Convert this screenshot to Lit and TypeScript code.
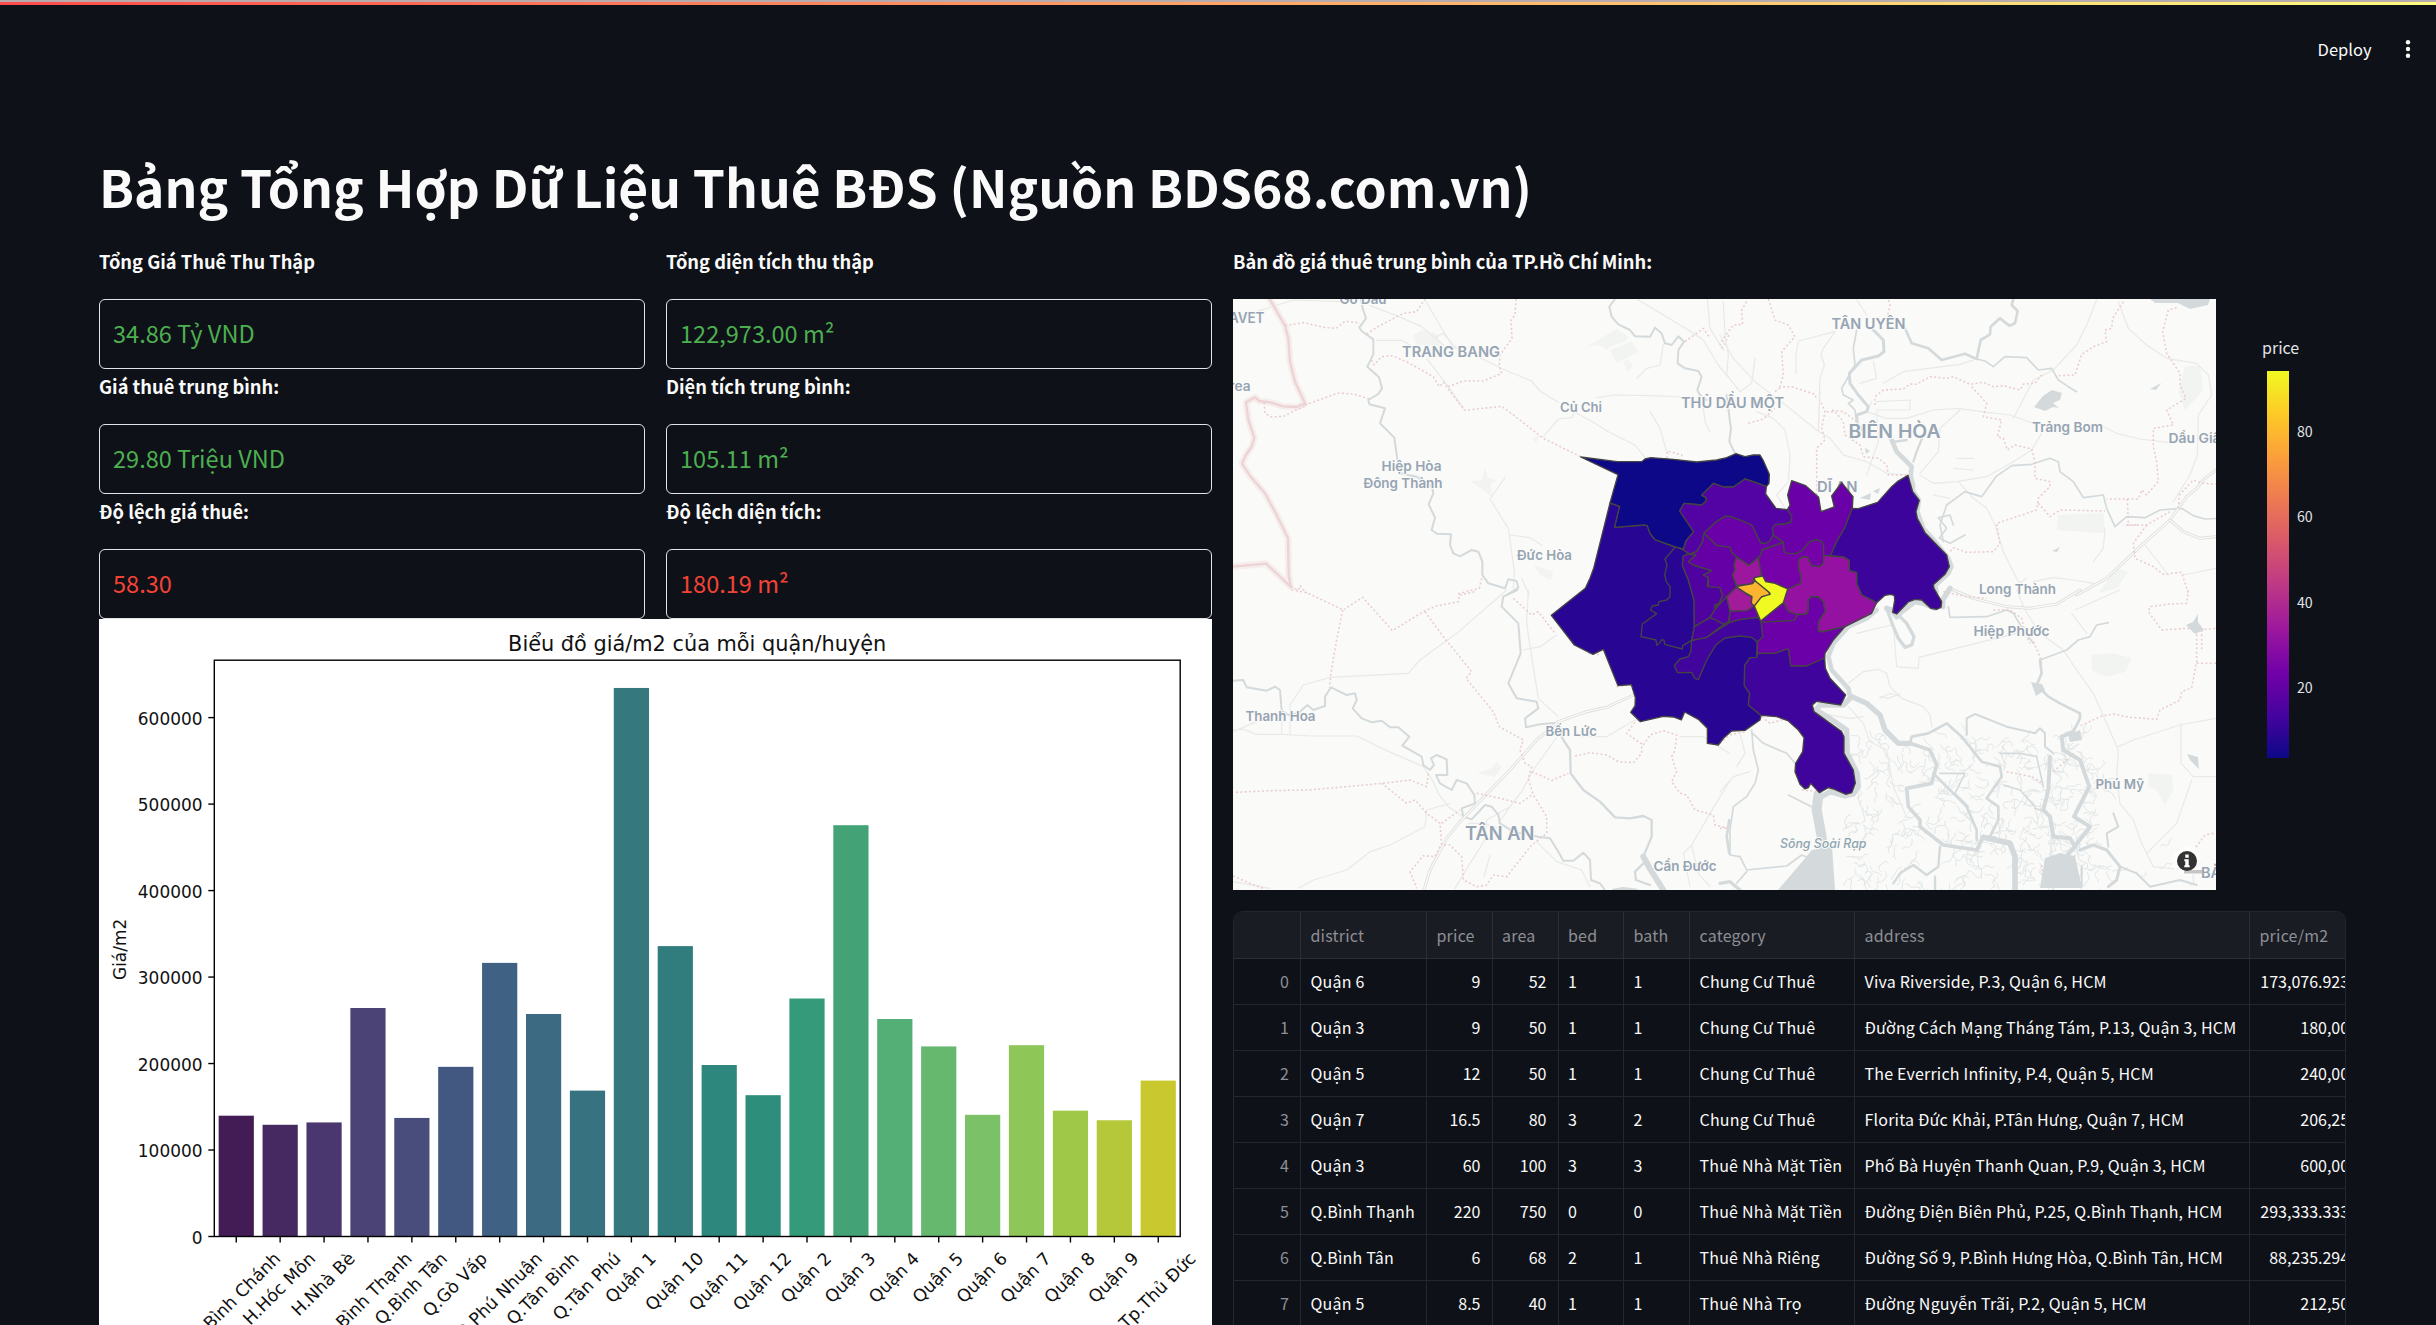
import { LitElement, html, svg, css } from "lit";
import { customElement } from "lit/decorators.js";

const FONT = css`"Noto Sans CJK JP", "Noto Sans", sans-serif`;

/* ---------- metrics ---------- */

interface Stat { label: string; value: string; tone: "good" | "bad"; }

const STATS: Stat[] = [
  { label: "Tổng Giá Thuê Thu Thập", value: "34.86 Tỷ VND", tone: "good" },
  { label: "Tổng diện tích thu thập", value: "122,973.00 m²", tone: "good" },
  { label: "Giá thuê trung bình:", value: "29.80 Triệu VND", tone: "good" },
  { label: "Diện tích trung bình:", value: "105.11 m²", tone: "good" },
  { label: "Độ lệch giá thuê:", value: "58.30", tone: "bad" },
  { label: "Độ lệch diện tích:", value: "180.19 m²", tone: "bad" },
];

@customElement("stat-box")
export class StatBox extends LitElement {
  static properties = { stat: { attribute: false } };
  declare stat: Stat;
  static styles = css`
    :host { display: flex; flex-direction: column; font-family: ${FONT}; }
    .label { color: #fafafa; font-weight: 700; font-size: 18.3px; line-height: 32px; white-space: nowrap; margin-bottom: 22px; }
    .box { box-sizing: border-box; height: 70px; border: 1px solid #e4e4e6; border-radius: 6px; padding: 0 13px; font-size: 23.55px; line-height: 67px; white-space: nowrap; }
    .good { color: #4caf50; }
    .bad { color: #f44336; }
  `;
  render() {
    return html`<div class="label">${this.stat.label}</div>
      <div class="box ${this.stat.tone}">${this.stat.value}</div>`;
  }
}

/* ---------- bar chart ---------- */

const BARS: [string, number, string][] = [
  ["H.Bình Chánh", 139700, "#431c56"], ["H.Hóc Môn", 129200, "#472961"], ["H.Nhà Bè", 131900, "#4b376f"],
  ["Q.Bình Thạnh", 264200, "#4b4376"], ["Q.Bình Tân", 137100, "#484d7c"], ["Q.Gò Vấp", 196200, "#435880"],
  ["Q.Phú Nhuận", 316400, "#3f6183"], ["Q.Tân Bình", 257300, "#3b6a82"], ["Q.Tân Phú", 168700, "#377280"],
  ["Quận 1", 634300, "#35797f"], ["Quận 10", 335800, "#317d7e"], ["Quận 11", 198300, "#2e877c"],
  ["Quận 12", 163400, "#2d8f7b"], ["Quận 2", 275200, "#349a79"], ["Quận 3", 475600, "#43a377"],
  ["Quận 4", 251500, "#53af75"], ["Quận 5", 219800, "#66b86f"], ["Quận 6", 140700, "#7ac167"],
  ["Quận 7", 221200, "#8ec657"], ["Quận 8", 145500, "#9fc748"], ["Quận 9", 134400, "#b4c83a"],
  ["Tp.Thủ Đức", 180300, "#c9c92f"],
];

@customElement("price-chart")
export class PriceChart extends LitElement {
  static styles = css`
    :host { display: block; background: #fff; height: 706px; overflow: hidden; }
    svg { display: block; font-family: "DejaVu Sans", sans-serif; font-size: 16.95px; fill: #111; }
    .title { font-size: 20.85px; }
    .tick { font-size: 17.4px; }
    .axis { fill: none; stroke: #000; stroke-width: 1.4; }
  `;
  render() {
    const L = 214.3, R = 1180.2, T = 660.2, B = 1236.5, unit = 86.48;
    const step = (R - L) / BARS.length;
    const ctx = document.createElement("canvas").getContext("2d")!;
    ctx.font = '17.4px "DejaVu Sans"';
    return html`<svg width="1113" height="706" viewBox="99 619 1113 706">
      <text class="title" x="697.2" y="651.3" text-anchor="middle">Biểu đồ giá/m2 của mỗi quận/huyện</text>
      <text transform="translate(125.5 949.4) rotate(-90)" text-anchor="middle">Giá/m2</text>
      ${BARS.map(([name, v, color], i) => {
        const cx = L + step * (i + 0.5), h = (v / 100000) * unit;
        const w = ctx.measureText(name).width;
        return svg`<rect x=${cx - 17.6} y=${B - h} width="35.2" height=${h} fill=${color}/>
          <path class="axis" d="M${cx} ${B}v6"/>
          <text class="tick" transform="translate(${cx + w * 0.354 + 3.3} 1259.7) rotate(-45)" text-anchor="end">${name}</text>`;
      })}
      ${[0, 1, 2, 3, 4, 5, 6].map((n) => svg`<path class="axis" d="M${L} ${B - n * unit}h-6"/>
        <text x="202.5" y=${B - n * unit + 7} text-anchor="end">${n * 100000}</text>`)}
      <rect class="axis" x=${L} y=${T} width=${R - L} height=${B - T}/>
    </svg>`;
  }
}

/* ---------- map ---------- */

type Tile = { x: number; y: number; road?: string[]; river?: [number, string][]; edge?: string[]; area?: string[]; green?: string[]; frontier?: string[]; motor?: string[] };

const TILES: Tile[] = [
  {
    x: 1230, y: 295,
    frontier: [
      "M112 0 165 92 175 130 180 200 195 260 225 325 200 336 160 334 120 322 88 318 75 307 48 322 55 375 73 428 65 455 48 480 36 505 60 543 105 595 140 660 174 730 176 840 182 875",
      "M9 815 108 806 145 840 182 875",
    ],
    edge: [
      "M165 92 220 83 280 97 318 100 345 79 390 84", "M410 118 440 97 520 55 560 50 585 12", "M225 330 325 294 370 297 418 312",
      "M102 322 105 355 125 366 160 364 200 344 225 333", "M424 195 432 210 455 185 485 182 530 200 610 245 628 275 640 262 668 300 705 346 815 334 870 375 940 430 1050 484 1165 540",
      "M858 12 855 60 843 75 846 130 810 180 808 215 815 235 760 258 700 258 655 275", "M182 875 205 885 210 872 230 895",
      "M1310 490 1312 468 1355 480 1357 490", "M755 850 748 880 680 897", "M1365 140 1420 100 1440 130", "M1475 160 1500 115",
    ],
    river: [
      [6, "M393 12 398 40 408 70 388 98 395 108 430 133 430 178 412 215 447 247 456 280 445 297 415 315 418 328 465 340 450 385 493 428 503 500 510 535 560 545 606 575 610 595 596 628 615 668 605 705 620 716 663 718 660 750 670 775 690 784 725 765 745 770 757 800 757 840 775 865 825 880 835 853 860 858 865 878 830 900"],
      [6, "M1155 12 1138 35 1145 65 1165 88 1200 105 1215 124 1260 125 1275 98 1295 115 1305 145 1325 150 1345 124 1362 140 1345 165 1343 205 1365 220 1405 228 1415 245 1402 285 1410 300 1430 315"],
    ],
    road: [
      "M9 70 80 50 190 15 330 20 M420 32 500 62 575 95 640 150 M585 15 665 150 675 160 M440 136 515 136 545 153 M750 188 825 225 905 258 930 288 985 322 M1035 352 1090 382 1135 410 1215 450 1245 488",
      "M590 190 655 275 700 340 M940 425 985 372 1025 368 1035 350 M1100 308 1150 300 1260 302 1360 306 M825 548 780 612 835 700 853 830 850 880 M840 720 900 728 935 750 M1225 15 1375 105 1420 135 1465 210 1498 250 M1432 12 1440 100 1480 165",
      "M620 125 640 115 680 160 M1220 250 1250 220 1290 210 1300 150 M1260 350 1290 400 1310 470 M1420 340 1425 380 1440 410 M875 850 898 900",
    ],
    green: ["M1070 155 1160 102 1195 125 1190 137 1140 155 1130 165 1110 150z", "M1140 165 1205 140 1225 172 1160 203z", "M1180 205 1190 192 1210 210 1195 230z"],
    area: ["M550 120 575 105 620 115 635 155 560 150z", "M720 558 755 555 765 520 775 550 800 555 780 570 790 610 760 585z", "M912 810 970 830 962 855 930 840z", "M905 430 930 420 918 445z"],
  },
  {
    x: 1720, y: 295,
    river: [
      [8, "M555 100 575 145 625 160 665 195 735 176 770 192 782 135 810 118 812 95 840 70 868 92 885 85 893 48 875 30 880 12"],
      [5, "M770 192 795 198 820 215 855 185 920 188 955 225 995 220 1015 255 1045 275 1070 290"],
      [9, "M460 105 490 135 492 170 475 183 425 195 388 235 390 265 415 300 445 335 440 350 410 360 412 385 430 410"],
      [5, "M410 105 400 160 405 210 388 240 365 280 370 300 400 315 385 325 405 345 410 380"],
      [14, "M515 435 530 470 555 495 575 515 572 540 580 575"],
      [7, "M608 425 590 470 580 500 M525 440 560 435"],
      [14, "M572 545 580 590 597 615 592 650 610 700 650 745 685 790 694 815 685 835 645 872 650 890"],
      [6, "M20 300 30 380 33 400 28 440 45 475"],
      [5, "M670 740 660 690 680 630 735 590 785 605 828 545 875 512 935 508 990 490 1015 500 1020 530 1060 560 1090 608 1150 600 1160 640 1185 695 1220 665 1275 668 1320 645 1385 640 1420 662 1455 672 1500 670"],
      [5, "M700 690 690 660 655 668 680 700 658 730 690 745 735 720"],
    ],
    area: [],
    green: ["M1395 215 1440 210 1450 285 1395 345 1375 290z", "M1015 660 1150 655 1155 715 1010 705z", "M1135 895 1190 820 1225 830 1190 880z"],
    edge: [
      "M505 15 510 30 500 75", "M80 20 65 45 68 88 40 90 10 130 0 150", "M145 12 165 75 205 90 225 125 185 170 190 240 180 275 215 275 285 298 290 315",
      "M165 290 185 275", "M465 330 465 305 490 285 550 282 570 267 590 268 630 245 680 250 700 245 750 268 790 262 820 275 850 272 900 285 910 267 945 265 965 240", "M755 275 800 325 790 365 845 375 832 425 850 430 862 465 885 450 935 462 945 500 945 550 990 560 990 575 955 610 950 645 830 685 840 745 820 770 740 772 700 758 690 770",
      "M955 625 990 665 1020 645 1155 648", "M1210 20 1178 70 1175 100 1155 105 1160 140 1120 155 1085 178 1065 240 1015 242", "M1370 38 1345 45 1328 110 1340 175 1380 235 1380 270 1398 310 1340 345 1360 390 1300 400 1300 455 1310 500 1315 560 1280 600 1265 585 1255 612 1160 612",
      "M290 600 290 460 315 435 305 400 315 350 300 315", "M320 350 345 350 370 380 375 420 420 450 430 485 475 490 500 510 505 540 560 540", "M1222 612 1225 690 1280 690 1350 650", "M1250 690 1210 690 M1280 690 1240 745 1245 790 1300 815 1330 838 1385 832 1405 895", "M1375 640 1378 600 1420 555 1450 565 1490 568", "M85 385 130 372 165 340", "M410 380 370 350 330 345",
    ],
    road: [
      "M10 20 15 120 25 180 20 240 60 290 95 265 105 190 M0 120 40 190 105 260 190 325 290 405 330 430 370 480 440 500 500 535 570 540 M110 350 160 370 195 405 210 480 205 560 170 600 195 640 M300 290 295 410 M345 110 310 160 303 180 313 210 300 250 295 400",
      "M410 15 440 60 M345 110 235 138 228 180 228 235 M490 265 550 230 720 208 760 195 M560 370 640 345 715 340 800 352 870 360 940 385 M1150 395 1190 415 1260 432 1345 442 M720 345 660 400 655 470 600 535 M600 540 640 565 710 560 800 545 880 500 935 465 965 415",
      "M715 560 760 610 800 640 825 690 850 770 895 860 M1130 15 1100 90 1070 150 1000 225 940 255 880 370 M1195 20 1225 100 1280 150 1340 190 1430 205 1465 240 1475 300 1435 360 1432 480 1410 540 1360 620 M1155 700 1150 760 1120 800 M1275 750 1345 840 M940 860 1000 848 1060 855 1120 865 M920 850 890 870 M1390 840 1488 820",
      "M470 320 570 315 570 345 470 345 M455 320 440 350 500 370 560 370 M640 600 690 610 M710 490 760 490 M700 520 760 525 M470 350 475 440 440 540 M460 200 470 250 420 265",
    ],
    motor: ["M1488 525 1455 550 1430 580 1400 605 1350 675 1260 755 1160 850 1070 900", "M1350 675 1390 710 1440 730 1488 725"],
  },
  {
    x: 1230, y: 590,
    river: [
      [6, "M9 272 40 270 50 292 110 302 135 290 150 300 155 362 175 375 205 370 232 345 250 360 285 348 285 320 303 292 350 315 375 310 380 330 368 355 395 385 425 397 455 392 480 412 505 412 538 440 517 467 575 500 580 525 600 540 612 525 603 505 620 495 650 508 652 555 618 555 630 580 665 600 680 570 710 580 733 615 735 640 695 655 700 680 725 688 765 645 785 650 805 675 810 700 850 725 925 740 960 745 985 785 1000 812 1030 812 1060 788 1080 810 1083 870 1110 880 1125 900"],
      [6, "M862 0 820 20 815 50 865 100 872 190 835 280 860 325 920 335 925 355 885 385 888 412 930 403 980 398"],
      [7, "M985 415 1000 450 1020 480 1022 550 1060 600 1110 635 1155 682 1200 685 1240 678 1265 690 1265 740 1240 800"],
      [18, "M1240 800 1262 840 1300 900"], [7, "M1240 820 1215 845 1218 870 1260 885"],
      [8, "M1150 900 1180 895 1220 900"],
      [8, "M1498 690 1490 740 1498 790"],
    ],
    edge: [
      "M185 0 230 8 340 60 398 22 487 122 585 62 620 48 685 35 688 15 735 5", "M338 60 320 150 305 235 298 292", "M585 65 640 140 725 245 708 265 790 365 808 410 880 450 870 480 885 520 905 530 895 565 910 615 950 680 950 730 905 765 830 860 790 855 770 885 740 890 700 870 695 800 660 765 635 765 M635 765 630 700 590 670 555 630 530 640 455 580",
      "M18 607 120 602 235 600 350 590 455 580 540 570 590 590 595 550", "M635 700 690 660 M740 610 790 620 870 640 905 615", "M905 545 940 560 965 572 1015 550", "M850 25 905 75 925 65 975 130", "M1035 498 1080 488 1130 495 1165 515 1210 518 1235 490 1235 462 1190 430 1220 390", "M1240 465 1260 435 1300 422 1340 435 1335 480 1325 500 1340 545 1325 575 1350 610 1370 615 1395 660 1450 675 1455 705 1498 715", "M9 858 60 880 100 895", "M630 770 615 800 580 797 540 845 560 895 M1075 190 1110 195 M1160 290 1200 285",
    ],
    road: [
      "M830 0 680 130 570 210 535 250 300 262 220 285 180 345 180 432 M9 425 80 395 M9 420 40 418 80 433 155 433 245 438 380 438 455 475 580 530 610 575 625 610 655 650 700 680 M895 0 890 100 905 200 925 325 985 380 M205 895 250 870 350 840 420 785 480 765 585 710 590 660 660 640",
      "M985 435 910 540 875 605 840 650 770 690 765 750 720 820 675 895 M805 700 840 650 M780 795 762 860 M920 755 980 815 1055 840 1080 890 M1045 440 1130 440 1180 410 1215 390 M1498 575 1440 670 1385 765 1360 790 1370 840 1380 890 M1385 765 1405 850 1440 890 M880 180 930 170 980 135 M155 380 155 430 M9 875 120 895",
      "M715 700 760 700 800 712 M1350 440 1420 440 1498 490",
    ],
    motor: ["M582 900 600 840 650 745 690 695 840 540 920 450 985 395 1070 365 1130 352 1210 315"],
    area: ["M740 550 785 535 800 515 815 530 795 560z"],
  },
  {
    x: 1720, y: 590,
    river: [
      [16, "M690 -5 668 30 668 50 M645 55 610 40 585 35 545 65 530 80 515 60 500 55"],
      [14, "M470 60 440 85 385 110 340 160 325 200 335 240 385 295 390 320"],
      [10, "M500 55 520 110 535 145 555 172 575 165 582 140 560 100 540 80"],
      [16, "M395 320 370 345 300 345 288 360 330 385 380 420 382 490 412 550 415 590 400 612 375 618 330 605 305 620"],
      [30, "M295 615 290 660 305 740 310 830 320 900"],
      [16, "M395 320 440 340 480 375 495 420 535 460 570 460"],
      [11, "M570 460 630 480 650 525 635 580 560 595 565 650 600 690 600 710 670 765 770 780 790 740 825 745"],
      [17, "M790 742 870 760 885 800 885 900"],
      [8, "M570 460 575 440 625 430 680 400 725 440 785 515 840 530 845 560 800 625 835 650 835 690 810 740 M640 550 670 580 740 650 770 720 770 750"],
      [6, "M740 435 740 385 765 372 860 410 945 430 960 415 975 430 975 470 1000 490"],
      [12, "M990 500 985 600 970 660 990 680 1000 740 1050 745 1065 770"],
      [12, "M1060 425 1025 440 1030 480 1080 510 1108 590 1062 680 1110 710 1060 775 1020 820"],
      [8, "M1060 425 1080 385 1080 370 1020 340 985 320 950 285 965 250 960 210"],
      [5, "M960 210 1040 180 1075 150 1110 140 1130 105 1165 98 M940 160 910 120 880 70 860 60 800 80 690 82 685 50"],
      [5, "M95 420 100 480 115 540 105 580 80 620 40 650 30 720 30 795 60 800 80 840 200 828 245 795 270 805 M80 845 50 880 M98 430 130 460 200 490 225 520 M205 615 275 650"],
      [7, "M660 770 655 830 620 855 580 825 540 850 520 880 M645 860 645 900"],
      [9, "M1080 780 1120 765 1160 780 1200 830 1190 870 1165 890"],
      [6, "M1200 830 1250 850 1290 890 1380 870 1430 885 M1180 670 1195 710 1160 730 1165 770 M1085 830 1085 890"],
      [10, "M0 880 30 875 60 900"],
      [5, "M840 490 900 490 950 500 970 590 M660 550 735 550 705 610 745 650 M850 585 900 600 945 650 M945 655 975 665"],
    ],
    area: [], green: ["M1115 195 1180 190 1235 205 1215 245 1160 260 1115 240z", "M1285 550 1355 555 1360 600 1335 645 1310 600 1285 590z"],
    edge: [
      "M940 155 960 200 965 220", "M670 5 740 20 800 25 M820 60 870 60 905 85 915 130 930 160", "M1405 0 1400 40 1350 42 1290 50 1285 65 1325 120 1400 115 1430 120 1488 115 M1430 120 1430 215 1415 293 1385 305 1380 330 1320 360 1310 388 1230 382 1180 372 1145 378 1080 408", "M1430 220 1488 220 M1445 120 1445 180",
      "M1000 545 1040 510 1060 490 M0 460 30 435 75 425 M125 380 150 400 200 385 M245 600 295 605", "M1065 795 1040 870 M965 825 970 890 M1480 730 1455 735 1425 775 M0 715 20 715",
      "M860 545 935 560 970 580",
    ],
    road: [
      "M890 0 915 60 960 130 1030 180 1070 240 1120 310 1195 480 1190 560 1200 640 1240 690 1265 760 1300 830 1400 840",
      "M520 105 530 230 595 235 597 202 890 130 M515 105 410 130 M385 280 430 245 475 238 500 250 510 290 545 325 610 350 630 375 635 410 M1195 470 1240 450 1380 405 1488 385 M1383 400 1383 520 1420 560 1488 560 M1415 570 1370 700 1280 790 M0 605 40 560 90 545 M60 430 75 490 50 530",
      "M480 325 510 310 540 318 M480 320 505 325 540 312 M385 350 430 400 450 455 500 480 520 590 560 680 M1055 70 1100 130 M1065 60 1200 0",
      "M300 370 390 385 430 380",
    ],
    motor: ["M700 0 760 25 860 50 930 55 1010 42 1080 0"],
  },
];

/* Tidal creeks of the delta: short wandering strokes from a fixed seed. */
function creeks(): string {
  let s = 7;
  const rnd = () => ((s = (s * 16807) % 2147483647) / 2147483647);
  const inside = (x: number, y: number) => x > 1848 && x < 2110 && y > 733 + Math.max(0, 1880 - x) * 0.5 && y < 890;
  let d = "";
  for (let i = 0; i < 420; i++) {
    const x = 1850 + rnd() * (i % 5 === 0 ? 360 : 250), y = 735 + rnd() * 155;
    if (x > 2108 && y < 845) continue;
    if (x <= 2108 && !inside(x, y)) continue;
    d += `M${x.toFixed(1)} ${y.toFixed(1)}`;
    let a = rnd() * 6.28;
    for (let k = 0; k < 5; k++) {
      a += (rnd() - 0.5) * 2.4;
      d += `l${(Math.cos(a) * 3.4).toFixed(1)} ${(Math.sin(a) * 3.4).toFixed(1)}`;
    }
  }
  return d;
}

const WATER_AREAS = [
  "M2150 299 2155 303 2178 303 2190 309 2208 305 2210 299z",
  "M2043 396 2052 390 2062 393 2060 400 2053 403 2059 408 2053 407 2045 411 2034 407z",
  "M2150 389 2161 383 2156 390z M2052 551 2060 547 2057 552z",
  "M1812 850 1832 846 1835 890 1778 890 1790 876z",
  "M2186 625 2193 622 2198 614 2198 622 2204 630 2195 634z M2187 754 2198 757 2199 769 2190 760z",
  "M2045 858 2060 853 2075 856 2082 888 2040 888z M2031 682 2042 684 2045 690 2036 696z M2068 735 2080 730 2082 740 2070 742z",
  "M1860 498 1871 493 1870 500z M1873 491 1880 488 1878 494z M1865 448 1870 451 1866 454z",
];

const DISTRICTS: [string, string][] = [
  ["#290593", "210,189 161,385 150,415 136,445 34,526 103,615 159,643 190,628 234,737 274,734 286,773 285,798 272,817 301,845 370,829 400,831 424,840 434,816 475,838 502,865 502,910 535,915 552,893 575,873 615,871 660,840 663,826 625,795 629,760 613,737 614,676 630,653 650,652 652,606 600,450 450,340 430,327 406,321 345,299 330,280 322,257 312,255 224,262 239,199"],
  ["#0d0887", "122,51 232,65 305,65 315,57 332,53 400,58 470,66 530,60 560,53 588,41 615,50 640,45 660,45 670,62 688,103 687,130 679,140 648,128 615,117 580,141 550,141 521,130 485,166 498,172 499,183 485,195 432,190 419,213 461,275 438,303 430,327 406,321 345,299 330,280 322,257 312,255 224,262 239,199 210,189 234,104"],
  ["#290593", "406,321 375,357 381,375 374,405 379,425 390,440 390,470 380,480 357,485 355,495 337,498 331,510 350,521 307,552 303,590 348,600 350,616 361,607 363,600 372,600 374,613 427,627 428,617 455,601 463,560 462,480 445,420 427,375 430,348 445,340 430,330"],
  ["#5302a3", "521,130 550,141 580,141 615,117 648,128 679,140 677,162 708,205 742,209 756,229 753,246 735,252 705,254 697,265 700,285 690,303 675,311 662,309 635,255 600,240 570,229 555,229 525,248 492,280 488,305 470,335 450,342 430,330 438,303 461,275 419,213 432,190 485,195 499,183 498,172 485,166"],
  ["#6a00a8", "492,280 525,248 555,229 570,229 600,240 635,255 662,309 675,311 690,303 700,285 730,307 665,330 663,345 655,352 627,376 590,351 575,338 570,322 530,317"],
  ["#5002a1", "427,375 430,348 445,342 468,346 445,365 460,375 515,392 490,405 505,412 501,438 540,443 548,465 538,490 525,495 525,510 510,533 463,560 462,480 445,420"],
  ["#6500a7", "492,280 530,317 570,322 575,338 590,351 582,375 585,390 577,405 590,440 560,470 525,505 525,495 538,490 548,465 540,443 505,440 505,412 490,405 515,392 460,375 445,365 468,346 455,340 470,335 488,305"],
  ["#9c179e", "590,351 627,376 655,352 665,408 643,413 638,431 590,437 577,405 585,390 582,375"],
  ["#7501a8", "655,352 663,345 665,330 730,307 733,335 745,340 765,341 785,333 808,305 830,299 845,305 851,315 851,370 838,380 815,377 803,352 790,350 776,358 775,380 783,410 781,430 743,447 705,430 677,425 665,408"],
  ["#6a00a8", "755,122 797,137 836,172 843,215 883,201 875,168 905,128 939,170 937,205 915,262 890,305 871,348 851,346 851,315 845,305 830,299 808,305 785,333 765,341 745,340 733,335 730,307 700,285 697,265 705,254 735,252 753,246 756,229 742,209 750,195 743,165"],
  ["#3c049b", "937,205 955,206 1013,187 1055,140 1072,125 1104,106 1118,155 1138,181 1128,215 1132,235 1155,278 1220,345 1228,380 1215,403 1180,434 1182,445 1205,485 1203,502 1190,508 1172,505 1145,480 1125,478 1105,486 1070,522 1058,517 1064,480 1063,467 1053,463 1035,466 1010,488 965,465 950,430 950,398 928,392 928,362 912,351 871,348 890,305 915,262"],
  ["#9511a1", "871,348 912,351 928,362 928,392 950,398 950,430 965,465 1010,488 995,520 915,560 845,576 834,572 835,545 855,515 850,485 835,471 815,469 805,480 805,510 800,522 770,524 745,515 730,485 735,455 743,447 781,430 783,410 775,380 776,358 790,350 803,352 815,377 838,380 851,370 851,346"],
  ["#7100a8", "662,543 730,488 745,515 772,524 763,541 665,547"],
  ["#6c00a8", "663,547 763,541 772,524 800,522 805,510 805,480 815,469 835,471 850,485 855,515 835,545 834,572 845,576 915,560 880,600 855,640 854,654 800,678 752,678 745,628 738,628 705,640 652,640 652,606 668,590"],
  ["#3f049c", "652,640 705,640 738,628 745,628 752,678 800,678 854,654 856,685 870,715 917,765 902,795 830,784 817,795 822,815 905,875 912,890 912,940 940,990 946,1030 935,1058 918,1063 880,1047 865,1043 838,1058 812,1030 805,1043 795,1047 780,1033 765,995 767,970 788,935 792,893 775,870 745,843 710,830 663,826 625,795 629,760 613,737 614,676 630,653 650,652"],
  ["#41049d", "663,545 668,590 652,606 635,592 600,588 555,594 528,614 500,660 475,719 465,716 455,697 413,698 403,677 420,657 445,650 452,636 455,601 500,592 545,562 570,547 600,538 655,532"],
  ["#48039f", "463,560 510,533 528,540 552,553 500,592 455,601"],
  ["#5601a4", "510,533 525,508 560,470 570,515 565,545 552,553 528,540"],
  ["#6a00a8", "570,513 620,512 643,498 655,532 600,538 568,547"],
  ["#a11b9b", "590,441 615,460 636,470 634,490 643,498 620,512 570,513 560,470"],
  ["#f0f921", "643,413 668,408 677,425 705,430 743,447 730,488 662,543 643,498 655,475 690,460 645,424"],
  ["#fdb42f", "588,440 638,431 645,422 685,455 690,463 665,470 643,498 634,490 636,470 615,458"],
];

interface Place { t: string; x: number; y: number; w: number; size: number; italic?: boolean; }
/* x / y: start of the baseline; w: set width of the run. */
const PLACES: Place[] = [
  { t: "BAVET", x: 1220, y: 323, w: 44.5, size: 14.5 },
  { t: "Gò Dầu", x: 1339.5, y: 304, w: 47, size: 13.5 },
  { t: "area", x: 1221.5, y: 390.5, w: 29, size: 13 },
  { t: "TRANG BANG", x: 1402, y: 357, w: 98, size: 14.5 },
  { t: "Củ Chi", x: 1560, y: 411.5, w: 42, size: 13.5 },
  { t: "THỦ DẦU MỘT", x: 1681, y: 408, w: 103, size: 14.5 },
  { t: "Hiệp Hòa", x: 1381.5, y: 470.5, w: 60, size: 13.5 },
  { t: "Đông Thành", x: 1363.5, y: 488, w: 79, size: 13.5 },
  { t: "Đức Hòa", x: 1517, y: 559.5, w: 55, size: 13.5 },
  { t: "TÂN UYÊN", x: 1831.5, y: 328.5, w: 74, size: 14.5 },
  { t: "BIÊN HÒA", x: 1848.5, y: 438, w: 92, size: 18.5 },
  { t: "Trảng Bom", x: 2032, y: 432, w: 71, size: 13.5 },
  { t: "Dầu Giây", x: 2168.5, y: 442.5, w: 60, size: 13.5 },
  { t: "DĨ AN", x: 1817, y: 492, w: 40.5, size: 15 },
  { t: "Long Thành", x: 1979, y: 594, w: 77, size: 13.5 },
  { t: "Hiệp Phước", x: 1973.5, y: 636, w: 76, size: 13.5 },
  { t: "Thanh Hoa", x: 1245.5, y: 720.5, w: 70, size: 13.5 },
  { t: "Bến Lức", x: 1545.5, y: 736, w: 51.5, size: 13.5 },
  { t: "TÂN AN", x: 1465, y: 840, w: 69.5, size: 18.5 },
  { t: "Cần Đước", x: 1653.5, y: 870.5, w: 63, size: 13.5 },
  { t: "Sông Soài Rạp", x: 1780, y: 848, w: 86.5, size: 12.5, italic: true },
  { t: "Phú Mỹ", x: 2095.5, y: 788.5, w: 48.5, size: 13.5 },
  { t: "BÀ RỊA", x: 2201, y: 878, w: 48, size: 14.5 },
];

@customElement("price-map")
export class PriceMap extends LitElement {
  static styles = css`
    :host { display: flex; height: 591px; font-family: ${FONT}; }
    svg { display: block; flex: none; }
    .line { fill: none; stroke-linejoin: round; stroke-linecap: round; }
    .road { stroke: #e9e9e8; stroke-width: 3.6; }
    .motor { stroke: #dededd; stroke-width: 9; }
    .motor-in { stroke: #fafaf8; stroke-width: 4; }
    .water { stroke: #d4dadc; }
    .edge { stroke: #eaccd0; stroke-width: 4.6; stroke-dasharray: 6 7; stroke-linecap: butt; }
    .halo { stroke: #f5eeec; stroke-width: 20; }
    .frontier { stroke: #edd3d5; stroke-width: 7; }
    .green { fill: #f2f4f1; }
    .area { fill: #f3f3f1; }
    .creek { fill: none; stroke: #dfe4e5; stroke-width: 0.9; }
    .place { font-family: "Inter", "Noto Sans", sans-serif; font-weight: 600; fill: #96a4b3; stroke: #fafaf8; stroke-width: 2; paint-order: stroke; }
    .italic { font-style: italic; font-weight: 500; fill: #8ea5b0; }
    .district { stroke: #444; stroke-width: 4; stroke-linejoin: round; }
    .legend { flex: none; width: 100px; padding: 34.5px 0 0 46px; box-sizing: border-box; color: #e0e3e9; }
    .name { font-size: 16px; line-height: 26px; height: 37.5px; }
    .scale { display: flex; gap: 8.5px; padding-left: 5px; }
    .ramp { flex: none; width: 21.5px; height: 387px; background: linear-gradient(to top, #0d0887, #46039f 11.11%, #7201a8 22.22%, #9c179e 33.33%, #bd3786 44.44%, #d8576b 55.55%, #ed7953 66.66%, #fb9f3a 77.77%, #fdca26 88.88%, #f0f921); }
    .ticks { padding-top: 17.7px; font-size: 14.2px; line-height: 85.4px; }
  `;
  render() {
    return html`<svg width="983" height="591" viewBox="1233 299 983 591">
        <rect x="1233" y="299" width="983" height="591" fill="#fafaf8"/>
        <path class="creek" d=${creeks()}/>
        ${TILES.map((t) => svg`<g transform="translate(${t.x} ${t.y}) scale(.33333)">
          ${(t.green ?? []).map((d) => svg`<path class="green" d=${d}/>`)}
          ${(t.area ?? []).map((d) => svg`<path class="area" d=${d}/>`)}
          ${(t.road ?? []).map((d) => svg`<path class="line road" d=${d}/>`)}
          ${(t.river ?? []).map(([w, d]) => svg`<path class="line water" stroke-width=${w} d=${d}/>`)}
          ${(t.motor ?? []).map((d) => svg`<path class="line motor" d=${d}/><path class="line motor-in" d=${d}/>`)}
          ${(t.frontier ?? []).map((d) => svg`<path class="line halo" d=${d}/>`)}
          ${(t.frontier ?? []).map((d) => svg`<path class="line frontier" d=${d}/>`)}
          ${(t.edge ?? []).map((d) => svg`<path class="line edge" d=${d}/>`)}
        </g>`)}
        ${WATER_AREAS.map((d) => svg`<path fill="#d4dadc" d=${d}/>`)}
        ${PLACES.map((p) => svg`<text class="place ${p.italic ? "italic" : ""}" x=${p.x} y=${p.y} font-size=${p.size} textLength=${p.w} lengthAdjust="spacingAndGlyphs">${p.t}</text>`)}
        <g transform="translate(1540 440) scale(.33333)">
          ${DISTRICTS.map(([fill, pts]) => svg`<polygon class="district" fill=${fill} points=${pts}/>`)}
        </g>
        <circle cx="2187" cy="861" r="15" fill="#fff" opacity=".6"/>
        <rect x="2184" y="870" width="18" height="3.5" fill="#c9c4c4"/>
        <circle cx="2187" cy="861" r="10" fill="#333"/>
        <path fill="#fff" d="M2185.3 854.6h3.4v3.2h-3.4zM2184.3 859.2h4.4v6h1v2h-5.4v-2h1v-4h-1z"/>
      </svg>
      <div class="legend">
        <div class="name">price</div>
        <div class="scale"><div class="ramp"></div><div class="ticks">${[80, 60, 40, 20].map((n) => html`<div>${n}</div>`)}</div></div>
      </div>`;
  }
}

/* ---------- table ---------- */

const COLS = ["", "district", "price", "area", "bed", "bath", "category", "address", "price/m2"];
const ROWS: string[][] = [
  ["0", "Quận 6", "9", "52", "1", "1", "Chung Cư Thuê", "Viva Riverside, P.3, Quận 6, HCM", "173,076.9231"],
  ["1", "Quận 3", "9", "50", "1", "1", "Chung Cư Thuê", "Đường Cách Mạng Tháng Tám, P.13, Quận 3, HCM", "180,000"],
  ["2", "Quận 5", "12", "50", "1", "1", "Chung Cư Thuê", "The Everrich Infinity, P.4, Quận 5, HCM", "240,000"],
  ["3", "Quận 7", "16.5", "80", "3", "2", "Chung Cư Thuê", "Florita Đức Khải, P.Tân Hưng, Quận 7, HCM", "206,250"],
  ["4", "Quận 3", "60", "100", "3", "3", "Thuê Nhà Mặt Tiền", "Phố Bà Huyện Thanh Quan, P.9, Quận 3, HCM", "600,000"],
  ["5", "Q.Bình Thạnh", "220", "750", "0", "0", "Thuê Nhà Mặt Tiền", "Đường Điện Biên Phủ, P.25, Q.Bình Thạnh, HCM", "293,333.3333"],
  ["6", "Q.Bình Tân", "6", "68", "2", "1", "Thuê Nhà Riêng", "Đường Số 9, P.Bình Hưng Hòa, Q.Bình Tân, HCM", "88,235.2941"],
  ["7", "Quận 5", "8.5", "40", "1", "1", "Thuê Nhà Trọ", "Đường Nguyễn Trãi, P.2, Quận 5, HCM", "212,500"],
];
const NUMERIC = new Set([0, 2, 3, 8]);

@customElement("listing-table")
export class ListingTable extends LitElement {
  static styles = css`
    :host { display: block; box-sizing: border-box; width: 1113px; height: 440px; border: 1px solid #25272e; border-radius: 10px; overflow: hidden; font-family: ${FONT}; font-size: 16px; letter-spacing: 0.2px; color: #fafafa; }
    .row { display: grid; grid-template-columns: 67px 126px 65.5px 66px 65.5px 66px 165px 395px 120px; width: 1136px; }
    .cell { box-sizing: border-box; height: 46px; line-height: 44px; padding: 0 11px 0 9.5px; border-right: 1px solid #25272e; border-bottom: 1px solid #25272e; white-space: nowrap; }
    .num { text-align: right; letter-spacing: 0; }
    .idx, .head .cell { color: #8d8f95; }
    .head .cell { background: #1a1c24; height: 47px; line-height: 46px; text-align: left; border-color: #2d2f37; }
  `;
  render() {
    return html`<div class="row head">${COLS.map((c) => html`<div class="cell">${c}</div>`)}</div>
      ${ROWS.map((r) => html`<div class="row">${r.map((v, i) => html`<div class="cell ${NUMERIC.has(i) ? "num" : ""} ${i === 0 ? "idx" : ""}">${v}</div>`)}</div>`)}`;
  }
}

/* ---------- page ---------- */

@customElement("app-root")
export class AppRoot extends LitElement {
  static styles = css`
    :host { display: block; height: 1325px; overflow: hidden; background: #0e1117; color: #fafafa; font-family: ${FONT}; }
    .edge { height: 2px; background: #b7abae; }
    .ribbon { height: 3px; background: linear-gradient(90deg, #ff4b4b, #fffd80); }
    .bar { display: flex; justify-content: flex-end; align-items: center; gap: 32.5px; height: 88px; padding-right: 24px; }
    .deploy { font-size: 16.5px; line-height: 24px; }
    .bar svg { display: block; }
    .page { padding: 60px 90px 0 99px; }
    h1 { margin: 0 0 27px; font-size: 51.5px; line-height: 66px; font-weight: 700; white-space: nowrap; }
    .columns { display: grid; grid-template-columns: 1113px 1113px; column-gap: 21px; }
    .stats { display: grid; grid-template-columns: 1fr 1fr; column-gap: 21px; row-gap: 1px; margin-top: -1px; }
    .caption { font-size: 18.3px; font-weight: 700; line-height: 30px; margin-bottom: 23px; }
    listing-table { margin-top: 21px; }
  `;
  render() {
    return html`
      <div class="edge"></div>
      <div class="ribbon"></div>
      <div class="bar">
        <div class="deploy">Deploy</div>
        <svg width="8" height="20" viewBox="0 0 8 20"><g fill="#fafafa"><circle cx="4" cy="3.2" r="2.2"/><circle cx="4" cy="10" r="2.2"/><circle cx="4" cy="16.8" r="2.2"/></g></svg>
      </div>
      <div class="page">
        <h1>Bảng Tổng Hợp Dữ Liệu Thuê BĐS (Nguồn BDS68.com.vn)</h1>
        <div class="columns">
          <div>
            <div class="stats">${STATS.map((s) => html`<stat-box .stat=${s}></stat-box>`)}</div>
            <price-chart></price-chart>
          </div>
          <div>
            <div class="caption">Bản đồ giá thuê trung bình của TP.Hồ Chí Minh:</div>
            <price-map></price-map>
            <listing-table></listing-table>
          </div>
        </div>
      </div>`;
  }
}
